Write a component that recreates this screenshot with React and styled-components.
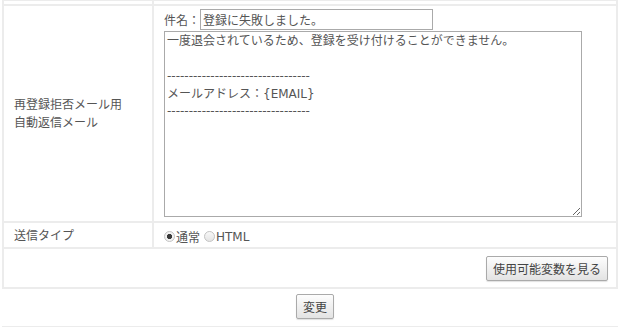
import React from 'react';
import styled, { createGlobalStyle } from 'styled-components';

const Global = createGlobalStyle`
  html, body { margin: 0; padding: 0; background: #fff; }
  body {
    font-family: "DejaVu Sans", "Noto Sans CJK JP", sans-serif;
    font-size: 12px;
    color: #555;
  }
`;

const Page = styled.div`
  width: 620px;
  height: 327px;
  overflow: hidden;
  padding: 0 2px;
  box-sizing: border-box;
`;

const Table = styled.table`
  width: 100%;
  border-collapse: collapse;
  table-layout: fixed;
  margin-top: -1px;
`;

const Row = styled.tr`
  height: ${p => p.$h}px;
`;

const Label = styled.th`
  width: 128px;
  padding: ${p => p.$pt || 0}px 10px 0;
  text-align: left;
  font-weight: normal;
  border: 2px solid #ececec;
  vertical-align: middle;
  line-height: 18px;
`;

const Cell = styled.td`
  padding: ${p => p.$pad || '0 10px'};
  border: 2px solid #ececec;
  text-align: ${p => p.$align || 'left'};
  vertical-align: middle;
`;

const Subject = styled.div`
  display: flex;
  align-items: center;
  height: 21px;
  margin-bottom: 1px;
`;

const TextInput = styled.input`
  width: 233px;
  height: 21px;
  box-sizing: border-box;
  border: 1px solid #aaa;
  font: inherit;
  color: #555;
  padding: 0 2px;
  margin: 0;
`;

const Body = styled.textarea`
  display: block;
  width: 418px;
  height: 186px;
  box-sizing: border-box;
  border: 1px solid #aaa;
  font: inherit;
  color: #555;
  line-height: 17.5px;
  padding: 1px 2px;
  margin: 0;
  resize: both;
`;

const Radio = styled.span`
  display: inline-flex;
  align-items: center;
  margin-right: 4px;
  padding-top: 3px;
`;

const Dot = styled.span`
  display: inline-block;
  width: 11px;
  height: 11px;
  border-radius: 50%;
  box-sizing: border-box;
  border: 1px solid #c4c4c4;
  background: ${p => p.$on ? 'radial-gradient(circle, #3a3a3a 0 2.4px, #f2f2f2 2.9px)' : 'linear-gradient(#f8f8f8, #e4e4e4)'};
  margin-right: 1px;
`;

const Button = styled.button`
  font: inherit;
  color: #444;
  height: 25px;
  padding: 0 6px;
  border: 1px solid #aaa;
  border-radius: 2px;
  background: linear-gradient(#fdfdfd, #e3e3e3);
  box-shadow: 0 1px 1px rgba(0,0,0,0.12);
  cursor: pointer;
`;

const Footer = styled.div`
  display: flex;
  justify-content: center;
  padding: 5px 0 7px 10px;
  border-bottom: 2px solid #ececec;
`;

const rule = '-'.repeat(33);
const bodyText = `一度退会されているため、登録を受け付けることができません。

${rule}
メールアドレス：{EMAIL}
${rule}`;

export default function App() {
  return (
    <Page>
      <Global />
      <Table>
        <tbody>
          <Row $h={5}>
            <Label />
            <Cell />
          </Row>
          <Row $h={217}>
            <Label>再登録拒否メール用<br />自動返信メール</Label>
            <Cell $pad="3px 10px 4px">
              <Subject>件名：<TextInput defaultValue="登録に失敗しました。" /></Subject>
              <Body defaultValue={bodyText} />
            </Cell>
          </Row>
          <Row $h={26}>
            <Label $pt={2}>送信タイプ</Label>
            <Cell>
              <Radio><Dot $on />通常</Radio>
              <Radio><Dot />HTML</Radio>
            </Cell>
          </Row>
          <Row $h={40}>
            <Cell colSpan={2} $align="right" $pad="0 8px">
              <Button>使用可能変数を見る</Button>
            </Cell>
          </Row>
        </tbody>
      </Table>
      <Footer>
        <Button>変更</Button>
      </Footer>
    </Page>
  );
}
